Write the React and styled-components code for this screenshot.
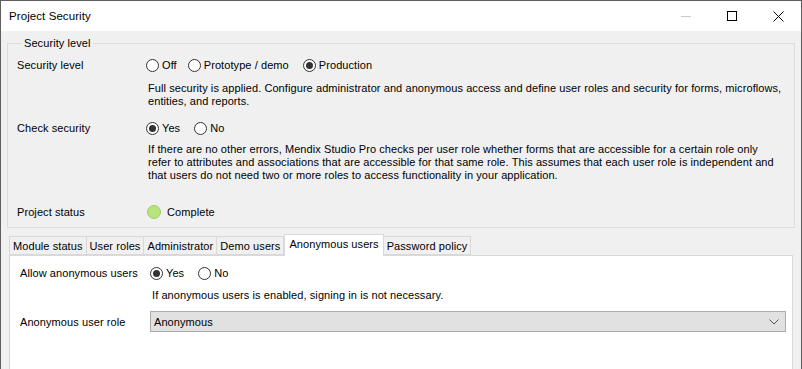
import React from "react";
import styled, { createGlobalStyle } from "styled-components";

const GlobalStyle = createGlobalStyle`
  html, body {
    margin: 0;
    padding: 0;
    background: #ffffff;
  }
  body {
    font-family: "Liberation Sans", Arial, sans-serif;
    font-size: 11px;
    letter-spacing: 0.08px;
    color: #000;
  }
`;

const Window = styled.div`
  width: 802px;
  height: 369px;
  box-sizing: border-box;
  border: 1px solid #5f5f5f;
  border-bottom: none;
  display: flex;
  flex-direction: column;
  overflow: hidden;
`;

const TitleBar = styled.div`
  height: 30px;
  flex: none;
  display: flex;
  align-items: center;
  background: #fff;
`;

const Title = styled.div`
  flex: 1;
  padding-left: 8px;
  font-size: 11.5px;
  padding-bottom: 1px;
`;

const CaptionButton = styled.div`
  width: 46px;
  height: 30px;
  display: flex;
  align-items: center;
  justify-content: center;
`;

const Body = styled.div`
  flex: 1;
  background: #f0f0f0;
  padding: 5px 6px 0 6px;
  display: flex;
  flex-direction: column;
`;

const Group = styled.fieldset`
  margin: 0;
  padding: 0 8px 5px 9px;
  border: 1px solid #dcdcdc;
  min-width: 0;
`;

const Legend = styled.legend`
  padding: 0 2px;
  margin-left: 5px;
  line-height: 14px;
`;

const FormGrid = styled.div`
  display: grid;
  grid-template-columns: 129px 1fr;
  align-items: center;
`;

const Label = styled.div`
  height: 20px;
  line-height: 20px;
  white-space: nowrap;
  margin-top: ${(p) => p.$mt || 0}px;
`;

const Controls = styled.div`
  display: flex;
  align-items: center;
  height: 20px;
  margin-top: ${(p) => p.$mt || 0}px;
`;

const Description = styled.div`
  grid-column: 2;
  line-height: 13px;
  padding-left: 2px;
  white-space: nowrap;
  margin-top: ${(p) => p.$mt || 0}px;
`;

const RadioItem = styled.label`
  display: flex;
  align-items: center;
  margin-right: ${(p) => p.$gap || 17}px;
`;

const RadioCircle = styled.span`
  width: 13px;
  height: 13px;
  box-sizing: border-box;
  border: 1px solid #333;
  border-radius: 50%;
  background: #fff;
  display: flex;
  align-items: center;
  justify-content: center;
  margin-right: 3px;

  &::after {
    content: "";
    width: 7px;
    height: 7px;
    border-radius: 50%;
    background: #333;
    display: ${(p) => (p.$checked ? "block" : "none")};
  }
`;

const StatusDot = styled.span`
  width: 14px;
  height: 14px;
  box-sizing: border-box;
  border-radius: 50%;
  background: #b7e47f;
  border: 1px solid #9fd061;
  margin: 0 6px 0 1px;
`;

const TabStrip = styled.div`
  display: flex;
  align-items: flex-end;
  margin-top: 6px;
  padding-left: 2px;
  height: 21px;
  position: relative;
  z-index: 1;
`;

const Tab = styled.div`
  box-sizing: border-box;
  height: ${(p) => (p.$active ? 22 : 19)}px;
  padding: 0 ${(p) => (p.$active ? 4 : 3)}px;
  margin-bottom: ${(p) => (p.$active ? -1 : 0)}px;
  display: flex;
  align-items: center;
  justify-content: center;
  border: 1px solid #d9d9d9;
  border-bottom: ${(p) => (p.$active ? "none" : "1px solid #d9d9d9")};
  border-left: ${(p) => (p.$first || p.$active ? "1px solid #d9d9d9" : "none")};
  background: ${(p) => (p.$active ? "#fff" : "#f0f0f0")};
  padding-bottom: ${(p) => (p.$active ? 3 : 0)}px;
`;

const Panel = styled.div`
  flex: 1;
  margin: 0 2px 0 2px;
  background: #fff;
  border: 1px solid #d9d9d9;
  border-bottom: none;
  padding: 7px 6px 0 10px;
`;

const PanelGrid = styled.div`
  display: grid;
  grid-template-columns: 130px 1fr;
  align-items: center;
`;

const Select = styled.div`
  height: 21px;
  box-sizing: border-box;
  border: 1px solid #adadad;
  background: #e1e1e1;
  display: flex;
  align-items: center;
  padding: 0 6px 0 3px;
  margin-top: ${(p) => p.$mt || 0}px;
`;

const SelectText = styled.span`
  flex: 1;
`;

const Radio = ({ checked, children, gap }) => (
  <RadioItem $gap={gap}>
    <RadioCircle $checked={checked} />
    {children}
  </RadioItem>
);

const tabs = [
  "Module status",
  "User roles",
  "Administrator",
  "Demo users",
  "Anonymous users",
  "Password policy",
];

export default function App() {
  return (
    <>
      <GlobalStyle />
      <Window>
        <TitleBar>
          <Title>Project Security</Title>
          <CaptionButton>
            <svg width="10" height="10" viewBox="0 0 10 10">
              <line x1="0" y1="5.5" x2="10" y2="5.5" stroke="#c8c8c8" strokeWidth="1" />
            </svg>
          </CaptionButton>
          <CaptionButton>
            <svg width="10" height="10" viewBox="0 0 10 10">
              <rect x="0.5" y="0.5" width="9" height="9" fill="none" stroke="#000" strokeWidth="1" />
            </svg>
          </CaptionButton>
          <CaptionButton>
            <svg width="11" height="11" viewBox="0 0 11 11">
              <path d="M0.5 0.5 L10.5 10.5 M10.5 0.5 L0.5 10.5" stroke="#000" strokeWidth="1" />
            </svg>
          </CaptionButton>
        </TitleBar>
        <Body>
          <Group>
            <Legend>Security level</Legend>
            <FormGrid>
              <Label $mt={5}>Security level</Label>
              <Controls $mt={5}>
                <Radio gap={11}>Off</Radio>
                <Radio gap={14}>Prototype / demo</Radio>
                <Radio checked>Production</Radio>
              </Controls>
              <Description $mt={7}>
                Full security is applied. Configure administrator and anonymous access and define user roles and security for forms, microflows,
                <br />
                entities, and reports.
              </Description>
              <Label $mt={10}>Check security</Label>
              <Controls $mt={10}>
                <Radio checked gap={14}>Yes</Radio>
                <Radio>No</Radio>
              </Controls>
              <Description $mt={5}>
                If there are no other errors, Mendix Studio Pro checks per user role whether forms that are accessible for a certain role only
                <br />
                refer to attributes and associations that are accessible for that same role. This assumes that each user role is independent and
                <br />
                that users do not need two or more roles to access functionality in your application.
              </Description>
              <Label $mt={20}>Project status</Label>
              <Controls $mt={20}>
                <StatusDot />
                Complete
              </Controls>
            </FormGrid>
          </Group>
          <TabStrip>
            {tabs.map((t, i) => (
              <Tab key={t} $first={i === 0} $active={t === "Anonymous users"}>
                {t}
              </Tab>
            ))}
          </TabStrip>
          <Panel>
            <PanelGrid>
              <Label>Allow anonymous users</Label>
              <Controls>
                <Radio checked gap={14}>Yes</Radio>
                <Radio>No</Radio>
              </Controls>
              <Description $mt={6}>
                If anonymous users is enabled, signing in is not necessary.
              </Description>
              <Label $mt={9}>Anonymous user role</Label>
              <Select $mt={9}>
                <SelectText>Anonymous</SelectText>
                <svg width="10" height="6" viewBox="0 0 10 6">
                  <path d="M0.5 0.5 L5 5 L9.5 0.5" fill="none" stroke="#555" strokeWidth="1" />
                </svg>
              </Select>
            </PanelGrid>
          </Panel>
        </Body>
      </Window>
    </>
  );
}
